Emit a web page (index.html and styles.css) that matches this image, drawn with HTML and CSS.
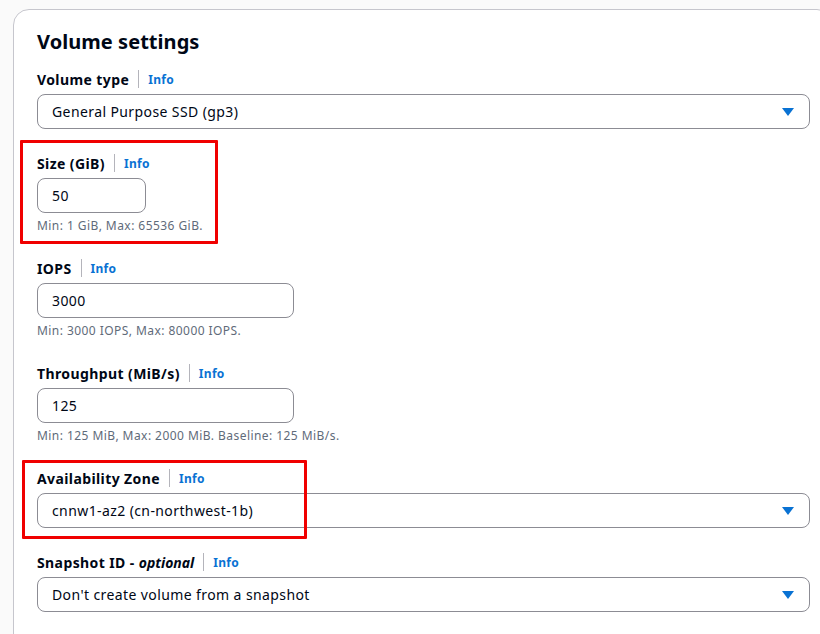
FILE: index.html
```html
<!DOCTYPE html>
<html>
<head>
<meta charset="utf-8">
<link rel="stylesheet" href="styles.css">
</head>
<body>
<div class="card">
  <h2 class="title">Volume settings</h2>
  <div class="fields">
    <div class="field">
      <div class="label"><span class="label-text">Volume type</span><span class="sep"></span><a class="info">Info</a></div>
      <div class="select"><span>General Purpose SSD (gp3)</span><span class="caret"></span></div>
    </div>
    <div class="field">
      <span class="mark mark-size"></span>
      <div class="label"><span class="label-text">Size (GiB)</span><span class="sep"></span><a class="info">Info</a></div>
      <div class="input input-small">50</div>
      <div class="hint">Min: 1 GiB, Max: 65536 GiB.</div>
    </div>
    <div class="field">
      <div class="label"><span class="label-text">IOPS</span><span class="sep"></span><a class="info">Info</a></div>
      <div class="input input-medium">3000</div>
      <div class="hint">Min: 3000 IOPS, Max: 80000 IOPS.</div>
    </div>
    <div class="field">
      <div class="label"><span class="label-text">Throughput (MiB/s)</span><span class="sep"></span><a class="info">Info</a></div>
      <div class="input input-medium">125</div>
      <div class="hint">Min: 125 MiB, Max: 2000 MiB. Baseline: 125 MiB/s.</div>
    </div>
    <div class="field">
      <span class="mark mark-az"></span>
      <div class="label"><span class="label-text">Availability Zone</span><span class="sep"></span><a class="info">Info</a></div>
      <div class="select"><span>cnnw1-az2 (cn-northwest-1b)</span><span class="caret"></span></div>
    </div>
    <div class="field">
      <div class="label"><span class="label-text">Snapshot ID - <i>optional</i></span><span class="sep"></span><a class="info">Info</a></div>
      <div class="select"><span>Don't create volume from a snapshot</span><span class="caret"></span></div>
    </div>
  </div>
</div>
</body>
</html>
```
FILE: styles.css
```css
html, body {
  margin: 0;
  padding: 0;
  background: #fafafa;
  overflow: hidden;
  height: 634px;
}
body {
  font-family: "Noto Sans", "Open Sans", sans-serif;
  color: #000716;
}
.card {
  margin: 9px 0 0 13px;
  width: 772px;
  height: 640px;
  padding: 20px 23px 0 23px;
  background: #ffffff;
  border: 1px solid #c6c6cd;
  border-radius: 16px;
}
.title {
  margin: 0;
  font-size: 20px;
  line-height: 24px;
  font-weight: 700;
  letter-spacing: 0.05px;
}
.fields {
  margin-top: 14px;
  display: flex;
  flex-direction: column;
  gap: 23px;
}
.field {
  position: relative;
  display: flex;
  flex-direction: column;
  align-items: flex-start;
}
.label {
  display: flex;
  align-items: center;
  height: 22px;
  font-size: 14px;
  font-weight: 700;
}
.label-text {
  letter-spacing: 0.4px;
}
.label i {
  font-style: italic;
  letter-spacing: 0;
}
.sep {
  width: 1px;
  height: 18px;
  background: #b4b4bb;
  margin: 0 9px 0 9px;
}
.info {
  color: #0972d3;
  font-size: 12px;
  font-weight: 700;
  letter-spacing: 0.3px;
}
.select, .input {
  box-sizing: border-box;
  margin-top: 4px;
  height: 35px;
  border: 1px solid #8c8c94;
  border-radius: 8px;
  padding: 0 15px 0 14px;
  display: flex;
  align-items: center;
  font-size: 14px;
  letter-spacing: 0.4px;
  background: #fff;
}
.select {
  width: 773px;
  justify-content: space-between;
}
.caret {
  width: 0;
  height: 0;
  border-left: 6px solid transparent;
  border-right: 6px solid transparent;
  border-top: 8px solid #0972d3;
  margin-top: 1px;
}
.input-small { width: 109px; }
.input-medium { width: 257px; }
.hint {
  margin-top: 5px;
  font-size: 12px;
  line-height: 16px;
  color: #5f6b7a;
  letter-spacing: 0.44px;
}
.mark {
  position: absolute;
  border: 3px solid #f00000;
  border-radius: 1px;
  box-sizing: border-box;
}
.mark-size {
  left: -17px;
  top: -12px;
  width: 198px;
  height: 104px;
}
.mark-az {
  left: -15px;
  top: -7px;
  width: 285px;
  height: 79px;
}
```
